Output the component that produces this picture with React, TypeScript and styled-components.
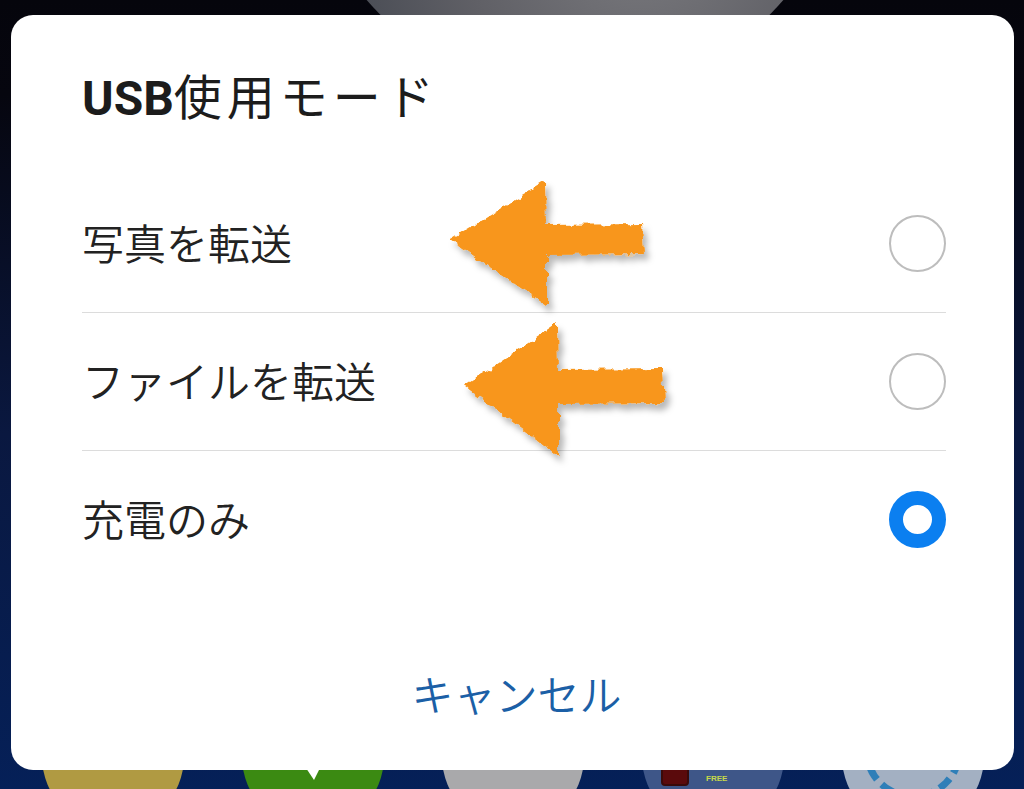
import React from "react";
import styled, { createGlobalStyle, css } from "styled-components";

const GlobalStyle = createGlobalStyle`
  html, body { margin: 0; padding: 0; }
  body {
    width: 1024px;
    height: 789px;
    overflow: hidden;
    font-family: "Roboto", "Noto Sans CJK JP", sans-serif;
  }
`;

const Screen = styled.div`
  position: relative;
  width: 1024px;
  height: 789px;
  overflow: hidden;
  display: flex;
  flex-direction: column;
  background: linear-gradient(180deg, #05050c 0%, #06060f 12%, #0a1840 55%, #052058 100%);
`;

const Moon = styled.div`
  position: absolute;
  left: 299px;
  top: -457px;
  width: 552px;
  height: 552px;
  border-radius: 50%;
  background: radial-gradient(circle at 62% 70%, #7c7c80 0%, #606066 35%, #42464f 65%, #1a2030 100%);
`;

const Dock = styled.div`
  margin-top: auto;
  display: flex;
  gap: 58px;
  padding-left: 42px;
  height: 103px;
  flex-shrink: 0;
`;

const DockIcon = styled.div<{ $color: string }>`
  position: relative;
  width: 142px;
  height: 142px;
  border-radius: 50%;
  background: ${(p) => p.$color};
  flex-shrink: 0;
`;

const Bubble = styled.div`
  position: absolute;
  left: 64px;
  top: 82px;
  width: 0;
  height: 0;
  border-left: 8px solid transparent;
  border-right: 6px solid transparent;
  border-top: 12px solid #ffffff;
`;

const AppBadge = styled.div`
  position: absolute;
  left: 19px;
  top: 78px;
  width: 24px;
  height: 18px;
  border-radius: 4px;
  background: #5a0a0c;
  border: 2px solid #3a0a0a;
`;

const FreeText = styled.span`
  position: absolute;
  left: 64px;
  top: 88px;
  font-family: "Liberation Sans", sans-serif;
  font-size: 8px;
  font-weight: 700;
  color: #c8d84a;
`;

const Gear = styled.div`
  position: absolute;
  left: 21px;
  top: 14px;
  width: 100px;
  height: 100px;
  border-radius: 50%;
  border: 7px dashed #2f7fb8;
  box-sizing: border-box;
`;

const Dialog = styled.div`
  position: absolute;
  left: 11px;
  top: 15px;
  width: 1003px;
  height: 755px;
  background: #ffffff;
  border-radius: 22px;
  display: flex;
  flex-direction: column;
  box-sizing: border-box;
`;

const Title = styled.h1`
  margin: 0;
  padding: 55px 71px 0;
  height: 48px;
  display: flex;
  align-items: baseline;
  font-family: "Noto Sans CJK JP", sans-serif;
  font-size: 48px;
  line-height: 48px;
  font-weight: 400;
  color: #1c1c1c;
  letter-spacing: 5px;
  white-space: nowrap;
`;

const Latin = styled.span`
  font-family: "Roboto", sans-serif;
  font-weight: 700;
  letter-spacing: 0;
`;

const List = styled.div`
  margin: 57px 68px 0 71px;
  display: flex;
  flex-direction: column;
`;

const Row = styled.div<{ $last?: boolean }>`
  height: 137px;
  display: flex;
  align-items: center;
  justify-content: space-between;
  ${(p) =>
    !p.$last &&
    css`
      border-bottom: 1px solid #dcdcdc;
    `}
`;

const Label = styled.span`
  padding-bottom: 4px;
  font-family: "Noto Sans CJK JP", sans-serif;
  font-size: 42px;
  line-height: 42px;
  color: #222222;
  font-weight: 350;
`;

const Radio = styled.span<{ $checked?: boolean }>`
  width: 57px;
  height: 57px;
  box-sizing: border-box;
  border-radius: 50%;
  background: #ffffff;
  border: ${(p) => (p.$checked ? "14px solid #0b7ff0" : "2.5px solid #bdbdbd")};
`;

const Footer = styled.div`
  margin-top: auto;
  padding-bottom: 56px;
  display: flex;
  justify-content: center;
`;

const CancelButton = styled.button`
  border: none;
  background: none;
  padding: 0 0 0 8px;
  font-family: "Noto Sans CJK JP", sans-serif;
  font-size: 42px;
  line-height: 42px;
  font-weight: 350;
  color: #1b5fa6;
`;

const ArrowSvg = styled.svg<{ $left: number; $top: number }>`
  position: absolute;
  left: ${(p) => p.$left}px;
  top: ${(p) => p.$top}px;
  overflow: visible;
`;

const ORANGE = "#f8961c";

function Arrow({ left, top, w, h, shaftTop, shaftBottom, back }: { left: number; top: number; w: number; h: number; shaftTop: number; shaftBottom: number; back: number }) {
  const mid = (shaftTop + shaftBottom) / 2;
  const d = `M2,${mid} L${back},2 L${back + 1},${shaftTop} L${w - 2},${shaftTop - 1} L${w},${shaftBottom} L${back + 2},${shaftBottom + 1} L${back + 2},${h - 2} Z`;
  return (
    <ArrowSvg $left={left} $top={top} width={w} height={h} viewBox={`0 0 ${w} ${h}`}>
      <path d={d} fill={ORANGE} filter="url(#rough)" />
    </ArrowSvg>
  );
}

const FilterDefs = styled.svg`
  position: absolute;
  width: 0;
  height: 0;
`;

export default function App() {
  return (
    <>
      <GlobalStyle />
      <Screen>
        <Moon />
        <Dock>
          <DockIcon $color="#b09a42" />
          <DockIcon $color="#3b8a12">
            <Bubble />
          </DockIcon>
          <DockIcon $color="#a9a9ab" />
          <DockIcon $color="#3e5688">
            <AppBadge />
            <FreeText>FREE</FreeText>
          </DockIcon>
          <DockIcon $color="#a3b0c2">
            <Gear />
          </DockIcon>
        </Dock>
        <FilterDefs>
          <defs>
            <filter id="rough" x="-10%" y="-10%" width="130%" height="140%">
              <feTurbulence type="fractalNoise" baseFrequency="0.12" numOctaves="2" seed="3" result="noise" />
              <feDisplacementMap in="SourceGraphic" in2="noise" scale="8" xChannelSelector="R" yChannelSelector="G" result="disp" />
              <feDropShadow dx="4" dy="6" stdDeviation="3" floodColor="#000000" floodOpacity="0.28" />
            </filter>
          </defs>
        </FilterDefs>
        <Dialog>
          <Title>
            <Latin>USB</Latin>使用モード
          </Title>
          <List>
            <Row>
              <Label>写真を転送</Label>
              <Radio />
            </Row>
            <Row>
              <Label>ファイルを転送</Label>
              <Radio />
            </Row>
            <Row $last>
              <Label>充電のみ</Label>
              <Radio $checked />
            </Row>
          </List>
          <Footer>
            <CancelButton>キャンセル</CancelButton>
          </Footer>
        </Dialog>
        <Arrow left={448} top={180} w={196} h={128} shaftTop={45} shaftBottom={74} back={97} />
        <Arrow left={462} top={322} w={202} h={136} shaftTop={48} shaftBottom={81} back={95} />
      </Screen>
    </>
  );
}
